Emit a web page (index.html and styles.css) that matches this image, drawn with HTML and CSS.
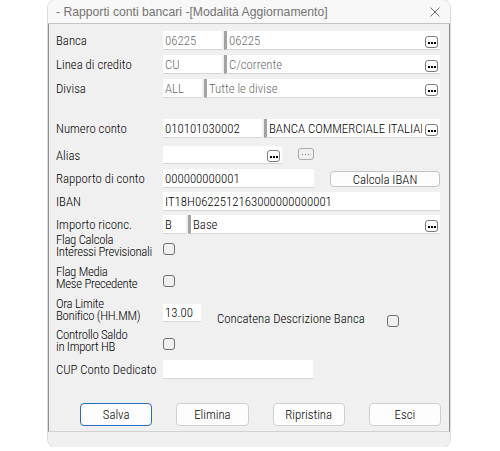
FILE: index.html
```html
<!DOCTYPE html>
<html>
<head>
<meta charset="utf-8">
<link rel="stylesheet" href="styles.css">
</head>
<body>
<div class="win">
  <div class="titlebar">
    <span class="title">- Rapporti conti bancari -[Modalità Aggiornamento]</span>
    <svg class="close" width="10" height="10" viewBox="0 0 10 10"><path d="M0.5 0.5 L9.5 9.5 M9.5 0.5 L0.5 9.5" stroke="#6e6e6e" stroke-width="1" fill="none"/></svg>
  </div>
  <div class="panel">
    <div class="row r-banca">
      <div class="lbl">Banca</div>
      <div class="field">
        <div class="inp dim w59">06225</div>
        <div class="inp desc dim"><span class="txt">06225</span><span class="dots"><svg width="11" height="10" viewBox="0 0 11 10"><rect x="2" y="6" width="2" height="2" fill="#000"/><rect x="5" y="6" width="2" height="2" fill="#000"/><rect x="8" y="6" width="2" height="2" fill="#000"/></svg></span></div>
      </div>
    </div>
    <div class="row r-linea">
      <div class="lbl">Linea di credito</div>
      <div class="field">
        <div class="inp dim w59">CU</div>
        <div class="inp desc dim"><span class="txt">C/corrente</span><span class="dots"><svg width="11" height="10" viewBox="0 0 11 10"><rect x="2" y="6" width="2" height="2" fill="#000"/><rect x="5" y="6" width="2" height="2" fill="#000"/><rect x="8" y="6" width="2" height="2" fill="#000"/></svg></span></div>
      </div>
    </div>
    <div class="row r-divisa">
      <div class="lbl">Divisa</div>
      <div class="field">
        <div class="inp dim w39">ALL</div>
        <div class="inp desc dim"><span class="txt">Tutte le divise</span><span class="dots"><svg width="11" height="10" viewBox="0 0 11 10"><rect x="2" y="6" width="2" height="2" fill="#000"/><rect x="5" y="6" width="2" height="2" fill="#000"/><rect x="8" y="6" width="2" height="2" fill="#000"/></svg></span></div>
      </div>
    </div>
    <div class="row r-numero">
      <div class="lbl">Numero conto</div>
      <div class="field">
        <div class="inp w99">010101030002</div>
        <div class="inp desc"><span class="txt">BANCA COMMERCIALE ITALIANA</span><span class="dots"><svg width="11" height="10" viewBox="0 0 11 10"><rect x="2" y="6" width="2" height="2" fill="#000"/><rect x="5" y="6" width="2" height="2" fill="#000"/><rect x="8" y="6" width="2" height="2" fill="#000"/></svg></span></div>
      </div>
    </div>
    <div class="row r-alias">
      <div class="lbl">Alias</div>
      <div class="field">
        <div class="inp w119"><span class="txt"></span><span class="dots"><svg width="11" height="10" viewBox="0 0 11 10"><rect x="2" y="6" width="2" height="2" fill="#000"/><rect x="5" y="6" width="2" height="2" fill="#000"/><rect x="8" y="6" width="2" height="2" fill="#000"/></svg></span></div>
        <span class="dots light"><svg width="14" height="10" viewBox="0 0 14 10"><rect x="3" y="6" width="1" height="1" fill="#777"/><rect x="6" y="6" width="1" height="1" fill="#777"/><rect x="9" y="6" width="1" height="1" fill="#777"/></svg></span>
      </div>
    </div>
    <div class="row r-rapporto">
      <div class="lbl">Rapporto di conto</div>
      <div class="field">
        <div class="inp w151">000000000001</div>
        <div class="btn calc">Calcola IBAN</div>
      </div>
    </div>
    <div class="row r-iban">
      <div class="lbl">IBAN</div>
      <div class="field">
        <div class="inp grow">IT18H0622512163000000000001</div>
      </div>
    </div>
    <div class="row r-importo">
      <div class="lbl">Importo riconc.</div>
      <div class="field">
        <div class="inp w23">B</div>
        <div class="inp desc"><span class="txt">Base</span><span class="dots"><svg width="11" height="10" viewBox="0 0 11 10"><rect x="2" y="6" width="2" height="2" fill="#000"/><rect x="5" y="6" width="2" height="2" fill="#000"/><rect x="8" y="6" width="2" height="2" fill="#000"/></svg></span></div>
      </div>
    </div>
    <div class="row tall r-flag1">
      <div class="lbl two"><span>Flag Calcola</span><span>Interessi Previsionali</span></div>
      <div class="field"><span class="chk"></span></div>
    </div>
    <div class="row tall r-flag2">
      <div class="lbl two"><span>Flag Media</span><span>Mese Precedente</span></div>
      <div class="field"><span class="chk"></span></div>
    </div>
    <div class="row tall r-ora">
      <div class="lbl two"><span>Ora Limite</span><span>Bonifico (HH.MM)</span></div>
      <div class="field">
        <div class="inp w38 ora">13.00</div>
        <span class="concat">Concatena Descrizione Banca</span>
        <span class="chk concat-chk"></span>
      </div>
    </div>
    <div class="row tall r-ctrl">
      <div class="lbl two"><span>Controllo Saldo</span><span>in Import HB</span></div>
      <div class="field"><span class="chk"></span></div>
    </div>
    <div class="row r-cup">
      <div class="lbl">CUP Conto Dedicato</div>
      <div class="field">
        <div class="inp w150"></div>
      </div>
    </div>
    <div class="actions">
      <div class="btn act primary">Salva</div>
      <div class="btn act">Elimina</div>
      <div class="btn act">Ripristina</div>
      <div class="btn act">Esci</div>
    </div>
  </div>
  <div class="status"></div>
</div>
</body>
</html>
```

FILE: styles.css
```css
html, body {
  margin: 0;
  padding: 0;
  background: #ffffff;
}

body {
  font-family: "Roboto", "Liberation Sans", Arial, sans-serif;
  font-stretch: condensed;
  font-weight: 300;
  font-size: 12.8px;
  color: #000;
}

.win {
  margin-left: 48px;
  width: 402px;
  height: 447px;
  background: #f0f0f0;
  border-radius: 8px;
  box-shadow: 0 0 0 1px #dcdcdc;
  overflow: hidden;
  display: flex;
  flex-direction: column;
}

.titlebar {
  height: 23px;
  flex: none;
  background: #f8f8f8;
  border-bottom: 1px solid #c4c4c4;
  display: flex;
  align-items: center;
  padding-left: 8px;
  padding-right: 10px;
}

.title {
  font-family: "Liberation Sans", Arial, sans-serif;
  font-stretch: normal;
  font-weight: 400;
  font-size: 12.2px;
  color: #737373;
  flex: 1;
  white-space: nowrap;
}

.close {
  flex: none;
  margin-top: 1px;
}

.panel {
  border-left: 1px solid #8f8f8f;
  border-right: 1px solid #8f8f8f;
  border-bottom: 1px solid #d2d2d2;
  padding: 7px 8px 5px 7px;
  display: flex;
  flex-direction: column;
}

.row {
  display: flex;
  height: 19px;
  flex: none;
}

.row.tall {
  height: 24px;
}

.lbl {
  width: 107px;
  flex: none;
  display: flex;
  align-items: center;
  white-space: nowrap;
}

.lbl.two {
  flex-direction: column;
  align-items: flex-start;
  justify-content: flex-start;
}

.lbl.two span {
  display: block;
  height: 12px;
  line-height: 12px;
  letter-spacing: -0.3px;
}

.field {
  width: 277px;
  display: flex;
  align-items: stretch;
}

.inp {
  background: #ffffff;
  box-sizing: border-box;
  border-bottom: 1px solid #d6d6d6;
  padding-left: 2px;
  display: flex;
  align-items: center;
  white-space: nowrap;
  overflow: hidden;
  flex: none;
}

.inp.dim {
  color: #6b6b6b;
}

.inp.desc {
  flex: 1;
  margin-left: 2px;
  border-left: 3px solid #a3a3a3;
  padding-left: 2px;
}

.inp.grow {
  flex: 1;
}

.txt {
  flex: 1;
  overflow: hidden;
  white-space: nowrap;
}

.w23 { width: 23px; }
.w38 { width: 38px; }
.w39 { width: 39px; }
.w59 { width: 59px; }
.w99 { width: 99px; }
.w119 { width: 119px; }
.w150 { width: 150px; }
.w151 { width: 151px; }

.dots {
  flex: none;
  width: 13px;
  height: 12px;
  box-sizing: border-box;
  border: 1px solid #7c7c7c;
  border-radius: 3px;
  background: #ffffff;
  align-self: flex-end;
  margin: 0 2px 1px 3px;
  display: flex;
  align-items: flex-start;
  justify-content: center;
  overflow: hidden;
}

.dots svg {
  display: block;
  margin-top: -1px;
}

.dots.light {
  width: 16px;
  background: transparent;
  border-color: #a9a9a9;
  margin: 1px 0 4px 16px;
}

.r-banca { margin-top: 0; }
.r-linea { margin-top: 5px; }
.r-divisa { margin-top: 5px; }
.r-numero { margin-top: 21px; }
.r-alias { margin-top: 8px; height: 18px; }
.r-rapporto { margin-top: 5px; }
.r-iban { margin-top: 4px; }
.r-importo { margin-top: 4px; }
.r-flag1 { margin-top: 0; }
.r-flag2 { margin-top: 8px; }
.r-ora { margin-top: 8px; }
.r-ctrl { margin-top: 7px; }
.r-cup { margin-top: 7px; }

.btn {
  box-sizing: border-box;
  border: 1px solid #c4c4c4;
  border-radius: 4px;
  background: #fdfdfd;
  display: flex;
  align-items: center;
  justify-content: center;
  white-space: nowrap;
}

.btn.calc {
  width: 110px;
  height: 16px;
  margin-left: 16px;
  margin-top: 2px;
}

.chk {
  width: 12px;
  height: 12px;
  box-sizing: border-box;
  border: 1px solid #6f6f6f;
  border-radius: 3px;
  align-self: flex-end;
  margin-bottom: 3px;
  flex: none;
}

.inp.ora {
  height: 18px;
  align-self: flex-end;
}

.concat {
  align-self: flex-end;
  width: 150px;
  margin-left: 16px;
  line-height: 12px;
  margin-bottom: -3px;
  white-space: nowrap;
}

.concat-chk {
  margin-left: 20px;
  margin-bottom: -5px;
}

.actions {
  display: flex;
  gap: 24px;
  margin-top: 24px;
  padding-left: 24px;
}

.btn.act {
  width: 73px;
  height: 23px;
  border-color: #cfcfcf;
}

.btn.primary {
  border-color: #2a6cbf;
}

.status {
  flex: 1;
  background: #f0f0f0;
}
```
